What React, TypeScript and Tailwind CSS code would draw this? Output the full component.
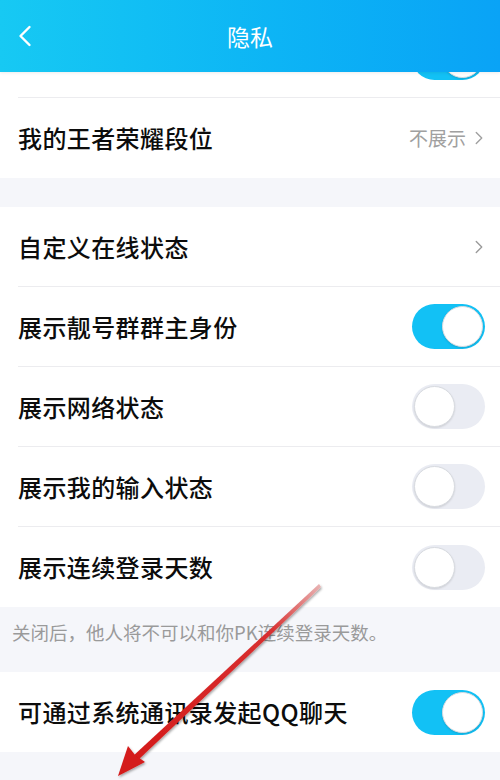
import { ChevronLeft, ChevronRight } from 'lucide-react'

const FONT = { fontFamily: '"Noto Sans CJK SC", "Noto Sans", sans-serif' }

function Toggle({ on }: { on: boolean }) {
  return (
    <div
      className={`w-[73px] h-[45px] rounded-full flex items-center p-[2px] ${
        on ? 'bg-[#12c1f5] justify-end' : 'bg-[#eaecf3] justify-start'
      }`}
    >
      <div className="w-[41px] h-[41px] rounded-full bg-white border border-[#d8dbe0] shadow-[0_1px_2px_rgba(0,0,0,0.12)]" />
    </div>
  )
}

function Row({
  label,
  right,
  divider = true,
}: {
  label: string
  right: React.ReactNode
  divider?: boolean
}) {
  return (
    <div className="h-[80px] bg-white flex items-center pl-[18px]">
      <div
        className={`flex-1 h-full flex items-center pr-[15px] ${divider ? 'border-b border-[#ececef]' : ''}`}
      >
        <span className="flex-1 text-[24px] font-medium text-[#0c0c0c] tracking-[0.4px]">{label}</span>
        {right}
      </div>
    </div>
  )
}

const arrow = (
  <span className="flex items-center text-[#9a9a9a]">
    <ChevronRight size={22} strokeWidth={1.5} className="mr-[-5px]" />
  </span>
)

export default function App() {
  return (
    <div className="relative w-[500px] h-[780px] overflow-hidden bg-[#f5f6fa]" style={FONT}>
      {/* header */}
      <div className="relative z-10 h-[72px] bg-gradient-to-r from-[#17c9f3] to-[#0aa3f6] flex items-center shadow-[0_1px_3px_rgba(0,0,0,0.08)]">
        <ChevronLeft size={36} strokeWidth={1.6} className="text-white ml-[7px]" />
        <div className="absolute inset-0 flex items-center justify-center text-white text-[23px] pointer-events-none">
          隐私
        </div>
      </div>

      {/* scrolled content */}
      <div className="mt-[-54px]">
        <Row label="" right={<Toggle on />} />
        <Row
          label="我的王者荣耀段位"
          divider={false}
          right={
            <span className="flex items-center text-[19px] text-[#a0a0a0]">
              不展示
              <ChevronRight size={22} strokeWidth={1.5} className="ml-[2px] mr-[-5px]" />
            </span>
          }
        />
        <div className="h-[29px]" />
        <Row label="自定义在线状态" right={arrow} />
        <Row label="展示靓号群群主身份" right={<Toggle on />} />
        <Row label="展示网络状态" right={<Toggle on={false} />} />
        <Row label="展示我的输入状态" right={<Toggle on={false} />} />
        <Row label="展示连续登录天数" right={<Toggle on={false} />} divider={false} />
        <div className="h-[65px] px-[12px] pt-[12px] text-[18.5px] text-[#9a9a9a]">
          关闭后，他人将不可以和你PK连续登录天数。
        </div>
        <Row label="可通过系统通讯录发起QQ聊天" right={<Toggle on />} divider={false} />
      </div>

      {/* red annotation arrow */}
      <svg className="absolute left-0 top-0 pointer-events-none" width="500" height="780" viewBox="0 0 500 780">
        <defs>
          <linearGradient id="shaft" x1="318" y1="585" x2="130" y2="765" gradientUnits="userSpaceOnUse">
            <stop offset="0" stopColor="#e8b0b0" />
            <stop offset="0.25" stopColor="#d83030" />
            <stop offset="1" stopColor="#d41a1a" />
          </linearGradient>
          <filter id="sh" x="-10%" y="-10%" width="120%" height="120%">
            <feDropShadow dx="1" dy="1.5" stdDeviation="1.2" floodColor="#000" floodOpacity="0.35" />
          </filter>
        </defs>
        <g filter="url(#sh)">
          <polygon points="319,584 321,587 137,761 132,757" fill="url(#shaft)" />
          <polygon points="118,776 128,746 135,755 145,762" fill="#d41a1a" />
        </g>
      </svg>
    </div>
  )
}
